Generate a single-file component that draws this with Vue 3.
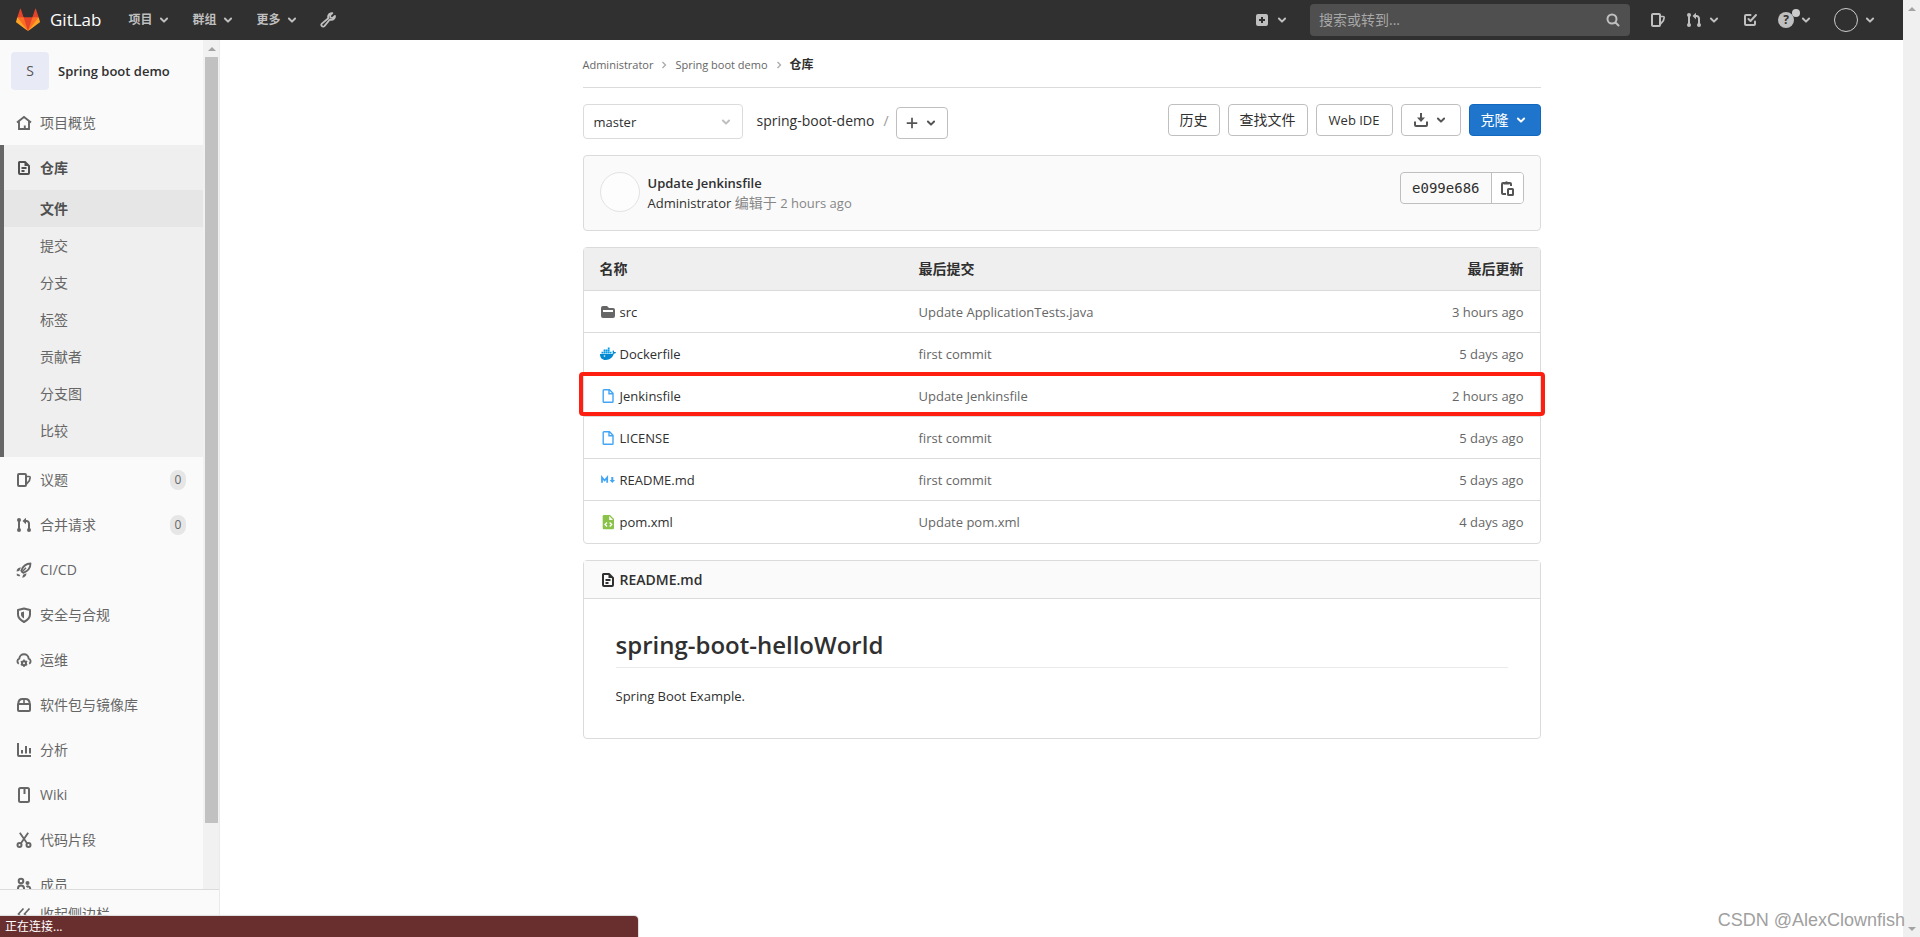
<script setup>
const menus = ['项目', '群组', '更多']

const repoLinks = ['文件', '提交', '分支', '标签', '贡献者', '分支图', '比较']

const sections = [
  { icon: 'issues', label: '议题', count: 0 },
  { icon: 'merge', label: '合并请求', count: 0 },
  { icon: 'rocket', label: 'CI/CD' },
  { icon: 'shield', label: '安全与合规' },
  { icon: 'cloud', label: '运维' },
  { icon: 'package', label: '软件包与镜像库' },
  { icon: 'chart', label: '分析' },
  { icon: 'book', label: 'Wiki' },
  { icon: 'scissors', label: '代码片段' },
  { icon: 'users', label: '成员' }
]

const files = [
  { icon: 'folder', name: 'src', commit: 'Update ApplicationTests.java', updated: '3 hours ago' },
  { icon: 'docker', name: 'Dockerfile', commit: 'first commit', updated: '5 days ago' },
  { icon: 'file', name: 'Jenkinsfile', commit: 'Update Jenkinsfile', updated: '2 hours ago', marked: true },
  { icon: 'file', name: 'LICENSE', commit: 'first commit', updated: '5 days ago' },
  { icon: 'markdown', name: 'README.md', commit: 'first commit', updated: '5 days ago' },
  { icon: 'xml', name: 'pom.xml', commit: 'Update pom.xml', updated: '4 days ago' }
]
</script>

<template>
  <svg class="sprite" aria-hidden="true">
    <symbol id="chevron" viewBox="0 0 16 16"><path d="M4.9 6.5 8 9.6l3.1-3.1" fill="none" stroke="currentColor" stroke-width="2" stroke-linecap="round" stroke-linejoin="round" /></symbol>
    <symbol id="angle" viewBox="0 0 8 8"><path d="M2.5 1 5.5 4l-3 3" fill="none" stroke="currentColor" stroke-width="1.3" /></symbol>
    <symbol id="wrench" viewBox="0 0 16 16"><path d="M8.300 6.300 1.900 11.600a1.700 1.700 0 0 0 2.500 2.500l5.300-6.400c1.600.5 3.300.1 4.300-1.100.8-.9 1.100-1.900.9-2.800L12.600 5.900l-2.200-.3-.3-2.200L12.300 1.200C9.700.6 7.400 3 8.300 6.300z" fill="none" stroke="currentColor" stroke-width="1.800" stroke-linejoin="round" stroke-linecap="round" /></symbol>
    <symbol id="plus-square" viewBox="0 0 16 16"><path fill="currentColor" fill-rule="evenodd" d="M4 2h8a2 2 0 0 1 2 2v8a2 2 0 0 1-2 2H4a2 2 0 0 1-2-2V4a2 2 0 0 1 2-2zm3 3v2H5v2h2v2h2V9h2V7H9V5z" /></symbol>
    <symbol id="search" viewBox="0 0 16 16"><g fill="none" stroke="currentColor" stroke-width="2" stroke-linecap="round"><circle cx="7" cy="7" r="4.500" /><path d="m10.500 10.500 3 3" /></g></symbol>
    <symbol id="issues" viewBox="0 0 16 16"><g fill="none" stroke="currentColor" stroke-width="2" stroke-linejoin="round"><rect x="2" y="2" width="8" height="12" rx="1" /><path d="M10.500 4.500h2.600a1 1 0 0 1 1 1.200l-.7 2.900-2.900 3.400" stroke-width="1.700" /></g></symbol>
    <symbol id="merge" viewBox="0 0 16 16"><g fill="none" stroke="currentColor" stroke-width="2"><path d="M3 3v10" /><path d="M9 4h1.500A2.500 2.500 0 0 1 13 6.500V13" /></g><g fill="currentColor"><circle cx="3" cy="3" r="2" /><circle cx="3" cy="13" r="2" /><circle cx="13" cy="13" r="2" /><path d="M10 .8v6.400L6.500 4z" /></g></symbol>
    <symbol id="todo" viewBox="0 0 16 16"><g fill="none" stroke="currentColor" stroke-width="2" stroke-linecap="round" stroke-linejoin="round"><path d="M8.500 3H4a1 1 0 0 0-1 1v8a1 1 0 0 0 1 1h8a1 1 0 0 0 1-1V9.500" /><path d="m6.500 7 2 2L14 3" /></g></symbol>
    <symbol id="home" viewBox="0 0 16 16"><path d="M1 7.500 8 2l7 5.500M3 6.500V14h10V6.500M8.800 14v-3.500" fill="none" stroke="currentColor" stroke-width="1.900" /></symbol>
    <symbol id="doc" viewBox="0 0 16 16"><path d="M3.500 2H9l4 4v7a1 1 0 0 1-1 1H4a1 1 0 0 1-1-1V2.500zM5.500 8h5M5.500 11h3" fill="none" stroke="currentColor" stroke-width="2" stroke-linejoin="round" /><path d="M8.500 1.500V6H13" fill="currentColor" /></symbol>
    <symbol id="rocket" viewBox="0 0 16 16"><path d="M14.500 1.500c-4.500 0-7.500 2.500-9.300 7.200l2.100 2.100c4.700-1.800 7.200-4.800 7.200-9.300z" fill="none" stroke="currentColor" stroke-width="1.800" stroke-linejoin="round" /><path d="m5.500 10.500 4.500-4.800" stroke="currentColor" stroke-width="1.400" /><path d="M.5 9.500C.8 7 2.500 5.500 5 5.600L3.200 9zM6.200 15.800c2.700-.3 4.300-2 4.200-4.500l-3.300 1.400zM.8 11.500l3.500 1.500-1 1.600-2.500-1.200z" fill="currentColor" /></symbol>
    <symbol id="shield" viewBox="0 0 16 16"><path d="M8 1.500 14 3v4.500c0 3.300-2.600 5.700-6 7.500-3.400-1.800-6-4.200-6-7.500V3z" fill="none" stroke="currentColor" stroke-width="2" stroke-linejoin="round" /><path d="M8 4.500v7C6.200 10.500 5 9.300 5 7.500v-2z" fill="currentColor" /></symbol>
    <symbol id="cloud" viewBox="0 0 16 16"><path d="M2.800 11.800A2.900 2.900 0 0 1 3.300 6.600 4.700 4.700 0 0 1 8 2.300a4.700 4.700 0 0 1 4.700 4.300 2.900 2.900 0 0 1 .5 5.200" fill="none" stroke="currentColor" stroke-width="1.900" /><circle cx="8" cy="11.200" r="2" fill="none" stroke="currentColor" stroke-width="2" /><path d="M8 7.500v2M8 13v2M4.800 9.300l1.600 1M9.600 12.200l1.600 1M4.800 13.100l1.600-1M9.600 10.200l1.600-1" stroke="currentColor" stroke-width="1.500" /></symbol>
    <symbol id="package" viewBox="0 0 16 16"><path d="M2 7h12v6a1 1 0 0 1-1 1H3a1 1 0 0 1-1-1zM2.300 6.500C2.500 3.500 4.500 2 6.500 2h3c2 0 4 1.500 4.200 4.500" fill="none" stroke="currentColor" stroke-width="2" stroke-linejoin="round" /><path d="M8 2v5" stroke="currentColor" stroke-width="1.600" /></symbol>
    <symbol id="chart" viewBox="0 0 16 16"><path d="M2 1v12a1 1 0 0 0 1 1h12M6 8v3.500M10 4v7.500M14 6v5.500" fill="none" stroke="currentColor" stroke-width="2" /></symbol>
    <symbol id="book" viewBox="0 0 16 16"><rect x="3" y="1" width="10" height="14" rx="1.500" fill="none" stroke="currentColor" stroke-width="2" /><path d="M8.500 2v5" stroke="currentColor" stroke-width="2" /></symbol>
    <symbol id="scissors" viewBox="0 0 16 16"><g fill="none" stroke="currentColor" stroke-width="2"><circle cx="3.500" cy="13" r="2" /><circle cx="12.500" cy="13" r="2" /><path d="M3.800.8 11.200 11.500M12.200.8 4.800 11.500" stroke-width="1.800" /></g></symbol>
    <symbol id="users" viewBox="0 0 16 16"><g fill="none" stroke="currentColor" stroke-width="2"><circle cx="5" cy="4" r="2.300" /><path d="M2 14v-2.500a3 3 0 0 1 6 0V14" /><path d="M10.500 10a2.200 2.200 0 0 1 3.700 1.500V14H8" /></g><circle cx="11.500" cy="6" r="2" fill="currentColor" /></symbol>
    <symbol id="collapse" viewBox="0 0 16 16"><path d="M7.500 2.500 2.500 8l5 5.500M13.500 2.500l-5 5.500 5 5.500" fill="none" stroke="currentColor" stroke-width="1.700" /></symbol>
    <symbol id="plus" viewBox="0 0 16 16"><path d="M8 2v12M2 8h12" stroke="currentColor" stroke-width="2" /></symbol>
    <symbol id="download" viewBox="0 0 16 16"><path d="M2 9.500V13a1 1 0 0 0 1 1h10a1 1 0 0 0 1-1V9.500" fill="none" stroke="currentColor" stroke-width="2" /><path d="M8 1v6" stroke="currentColor" stroke-width="2" /><path d="M4 5.500h8L8 10z" fill="currentColor" /></symbol>
    <symbol id="copy" viewBox="0 0 16 16"><path d="M7 14H4a1 1 0 0 1-1-1V4a1 1 0 0 1 1-1h7a1 1 0 0 1 1 1v2" fill="none" stroke="currentColor" stroke-width="2" /><path d="M4.500 4.500V2h1.700a1.500 1.500 0 0 1 2.600 0h1.700v2.500z" fill="currentColor" /><rect x="9" y="9" width="5" height="6" rx=".5" fill="none" stroke="currentColor" stroke-width="2" /></symbol>
    <symbol id="folder" viewBox="0 0 16 16"><path fill="#666" fill-rule="evenodd" d="M3 2h4l2 2h4a2 2 0 0 1 2 2v6a2 2 0 0 1-2 2H3a2 2 0 0 1-2-2V4a2 2 0 0 1 2-2zm0 4v2h10V6z" /></symbol>
    <symbol id="docker" viewBox="0 0 16 16"><path fill="#0288d1" d="M0 8h11.600c.8 0 1.300-.4 1.200-1.500-.4-.8-.2-1.700.3-2.200.7.5 1 1.100 1 1.800.8-.1 1.500 0 2 .3-.4 1-1.200 1.400-2.300 1.400C12.500 11.800 9.700 14 5.800 14 2 14 0 11.800 0 8z" /><path fill="#039be5" d="M1.500 5.700h1.800v1.800H1.500zM3.600 5.700h1.800v1.800H3.600zM5.700 5.700h1.800v1.800H5.700zM7.800 5.700h1.800v1.800H7.800zM9.900 5.700h1.600v1.800H9.900zM3.600 3.600h1.800v1.800H3.600zM5.700 3.600h1.800v1.800H5.700zM7.800 3.600h1.800v1.800H7.800zM7.800 1.500h1.800v1.800H7.800z" /><circle cx="4.500" cy="10" r=".8" fill="#fff" /></symbol>
    <symbol id="file" viewBox="0 0 16 16"><path d="M4 1.700h5.500L13 5.200v8.300a.8.8 0 0 1-.8.800H4a.8.8 0 0 1-.8-.8v-11A.8.8 0 0 1 4 1.700zM9 2v3.800h4" fill="none" stroke="#42a5f5" stroke-width="1.400" /></symbol>
    <symbol id="markdown" viewBox="0 0 16 16"><path d="M2 10.800V5.500l2.600 3 2.600-3v5.300" fill="none" stroke="#42a5f5" stroke-width="1.800" /><path d="M11.300 5h2v3h1.700l-2.700 3-2.700-3h1.700z" fill="#42a5f5" /></symbol>
    <symbol id="xml" viewBox="0 0 16 16"><path fill="#8bc34a" d="M4 1h6l4 4v9a1.300 1.300 0 0 1-1.300 1.300H4A1.300 1.300 0 0 1 2.700 14V2.300A1.300 1.300 0 0 1 4 1z" /><path d="M9.200 2v4H13z" fill="#fff" /><path d="M7 8.500 5 10.500l2 2M9.700 8.500l2 2-2 2" fill="none" stroke="#fff" stroke-width="1.300" /></symbol>
  </svg>

  <div class="window">
    <div class="page">
      <header class="navbar">
        <a class="brand" href="#">
          <svg width="24" height="24" viewBox="0 0 36 36" aria-hidden="true">
            <path fill="#e24329" d="M2 14l9.380 9v-9l-4-12.280c-.205-.632-1.176-.632-1.380 0z" />
            <path fill="#e24329" d="M34 14l-9.380 9v-9l4-12.280c.205-.632 1.176-.632 1.380 0z" />
            <path fill="#e24329" d="M18 34.380 3 14h30z" />
            <path fill="#fc6d26" d="M18 34.380 11.380 14H2l4 11z" />
            <path fill="#fc6d26" d="M18 34.380 24.620 14H34l-4 11z" />
            <path fill="#fca326" d="M2 14 .1 20.160c-.18.565 0 1.200.5 1.560l17.420 12.660z" />
            <path fill="#fca326" d="m34 14 1.900 6.160c.18.565 0 1.200-.5 1.560L18 34.380z" />
          </svg>
          <span>GitLab</span>
        </a>
        <nav class="menus">
          <button v-for="m in menus" :key="m" type="button" class="nav-btn">
            {{ m }}<svg class="icon"><use href="#chevron" /></svg>
          </button>
          <a class="nav-btn" href="#" aria-label="管理"><svg class="icon"><use href="#wrench" /></svg></a>
        </nav>
        <div class="tools">
          <button type="button" class="nav-btn" aria-label="新建">
            <svg class="icon"><use href="#plus-square" /></svg><svg class="icon"><use href="#chevron" /></svg>
          </button>
          <label class="search">
            <input type="text" placeholder="搜索或转到..." aria-label="搜索或转到">
            <svg class="icon"><use href="#search" /></svg>
          </label>
          <a class="nav-btn" href="#" aria-label="议题"><svg class="icon"><use href="#issues" /></svg></a>
          <button type="button" class="nav-btn" aria-label="合并请求">
            <svg class="icon"><use href="#merge" /></svg><svg class="icon"><use href="#chevron" /></svg>
          </button>
          <a class="nav-btn" href="#" aria-label="待办事项"><svg class="icon"><use href="#todo" /></svg></a>
          <button type="button" class="nav-btn help" aria-label="帮助">
            <span class="question">?</span><span class="dot"></span><svg class="icon"><use href="#chevron" /></svg>
          </button>
          <button type="button" class="nav-btn" aria-label="用户">
            <span class="user"></span><svg class="icon"><use href="#chevron" /></svg>
          </button>
        </div>
      </header>

      <div class="body">
        <aside class="sidebar">
          <div class="scroller">
            <nav class="side-nav">
              <a class="project" href="#"><span class="tile">S</span><span>Spring boot demo</span></a>
              <a class="item" href="#"><svg class="icon"><use href="#home" /></svg>项目概览</a>
              <div class="group">
                <a class="item strong" href="#"><svg class="icon"><use href="#doc" /></svg>仓库</a>
                <a v-for="(l, i) in repoLinks" :key="l" class="sub" :class="{ current: i === 0 }" href="#">{{ l }}</a>
              </div>
              <a v-for="s in sections" :key="s.label" class="item" href="#">
                <svg class="icon"><use :href="'#' + s.icon" /></svg>{{ s.label }}
                <span v-if="s.count !== undefined" class="count">{{ s.count }}</span>
              </a>
            </nav>
            <div class="track">
              <span class="up"></span>
              <span class="thumb"></span>
            </div>
          </div>
          <button type="button" class="toggle"><svg class="icon"><use href="#collapse" /></svg>收起侧边栏</button>
        </aside>

        <main class="main">
          <div class="container">
            <nav class="crumbs">
              <a href="#">Administrator</a><svg class="angle"><use href="#angle" /></svg>
              <a href="#">Spring boot demo</a><svg class="angle"><use href="#angle" /></svg>
              <a class="here" href="#">仓库</a>
            </nav>

            <div class="controls">
              <button type="button" class="branch">master<svg class="icon"><use href="#chevron" /></svg></button>
              <a class="path" href="#">spring-boot-demo</a>
              <span class="slash">/</span>
              <button type="button" class="btn add" aria-label="添加">
                <svg class="glyph"><use href="#plus" /></svg><svg class="icon"><use href="#chevron" /></svg>
              </button>
              <div class="actions">
                <a class="btn" href="#">历史</a>
                <a class="btn" href="#">查找文件</a>
                <a class="btn wide" href="#">Web IDE</a>
                <button type="button" class="btn" aria-label="下载">
                  <svg class="icon"><use href="#download" /></svg><svg class="icon"><use href="#chevron" /></svg>
                </button>
                <button type="button" class="btn primary">克隆<svg class="icon"><use href="#chevron" /></svg></button>
              </div>
            </div>

            <section class="commit">
              <span class="avatar"></span>
              <div class="info">
                <a class="title" href="#">Update Jenkinsfile</a>
                <p><a href="#">Administrator</a> <span class="zh">编辑于</span> 2 hours ago</p>
              </div>
              <div class="sha">
                <span>e099e686</span>
                <button type="button" aria-label="复制"><svg class="icon"><use href="#copy" /></svg></button>
              </div>
            </section>

            <div class="tree">
              <table>
                <thead>
                  <tr><th class="c-name">名称</th><th>最后提交</th><th class="c-time">最后更新</th></tr>
                </thead>
                <tbody>
                  <tr v-for="f in files" :key="f.name" :class="{ marked: f.marked }">
                    <td class="c-name"><a href="#"><svg class="icon"><use :href="'#' + f.icon" /></svg>{{ f.name }}</a></td>
                    <td>{{ f.commit }}</td>
                    <td class="c-time">{{ f.updated }}</td>
                  </tr>
                </tbody>
              </table>
            </div>

            <article class="readme">
              <header><svg class="icon"><use href="#doc" /></svg><a href="#">README.md</a></header>
              <div class="prose">
                <h1>spring-boot-helloWorld</h1>
                <p>Spring Boot Example.</p>
              </div>
            </article>
          </div>
        </main>
      </div>
    </div>
    <div class="page-track"><span class="up"></span><span class="down"></span></div>
    <div class="status">正在连接...</div>
    <div class="watermark">CSDN @AlexClownfish</div>
  </div>
</template>

<style>
body { margin: 0; }
</style>

<style scoped>
* { box-sizing: border-box; }
a { color: inherit; text-decoration: none; }
button { font: inherit; color: inherit; background: none; border: 0; padding: 0; }
p, h1 { margin: 0; }
.sprite { position: absolute; width: 0; height: 0; }
.icon { width: 16px; height: 16px; flex: none; display: block; }

.window {
  position: relative;
  display: flex;
  height: 100vh;
  overflow: hidden;
  background: #fff;
  color: #303030;
  font: 14px/20px "Open Sans", "Noto Sans CJK SC", sans-serif;
}
.page { flex: 1; min-width: 0; display: flex; flex-direction: column; }

.navbar {
  height: 40px;
  flex: none;
  display: flex;
  align-items: center;
  padding: 0 25px 0 16px;
  background: #303030;
  color: #bfbfbf;
}
.brand { display: flex; align-items: center; gap: 10px; font-size: 17px; color: #fff; }
.menus { display: flex; gap: 20px; margin-left: 27px; font-size: 12px; font-weight: 700; }
.nav-btn { display: flex; align-items: center; gap: 4px; position: relative; }
.tools { display: flex; align-items: center; gap: 20px; margin-left: auto; }
.search {
  display: flex;
  align-items: center;
  width: 320px;
  height: 32px;
  padding: 0 9px;
  border-radius: 4px;
  background: #4f4f4f;
}
.search input {
  flex: 1;
  min-width: 0;
  padding: 0;
  border: 0;
  outline: 0;
  background: none;
  color: #fff;
  font: 14px/20px "Open Sans", "Noto Sans CJK SC", sans-serif;
}
.search input::placeholder { color: #a8a8a8; opacity: 1; }
.question {
  width: 16px;
  height: 16px;
  border-radius: 50%;
  background: #bfbfbf;
  color: #303030;
  font-size: 12px;
  font-weight: 700;
  line-height: 16px;
  text-align: center;
}
.dot { position: absolute; left: 14px; top: -3px; width: 8px; height: 8px; border-radius: 50%; background: #ccc; }
.user { width: 24px; height: 24px; border: 1px solid #ccc; border-radius: 50%; }

.body { flex: 1; min-height: 0; display: flex; }
.sidebar {
  width: 220px;
  flex: none;
  display: flex;
  flex-direction: column;
  border-right: 1px solid #eaeaea;
  background: #fafafa;
  color: #666;
}
.scroller { flex: 1; min-height: 0; display: flex; }
.side-nav { flex: 1; min-width: 0; overflow: hidden; }
.project {
  display: flex;
  align-items: center;
  gap: 9px;
  height: 60px;
  padding: 2px 11px 0;
  color: #303030;
  font-size: 13px;
  font-weight: 600;
}
.tile {
  width: 38px;
  height: 38px;
  border-radius: 4px;
  background: #e8eaf6;
  color: #555;
  font-size: 14px;
  font-weight: 400;
  line-height: 38px;
  text-align: center;
}
.item { display: flex; align-items: center; gap: 8px; height: 45px; padding: 0 17px 0 16px; }
.group { padding-bottom: 8px; background: #efefef; box-shadow: inset 4px 0 #666; }
.strong { color: #4f4f4f; font-weight: 700; }
.sub { display: flex; align-items: center; height: 37px; padding-left: 40px; }
.current { color: #4f4f4f; font-weight: 700; background: #e6e6e6; box-shadow: inset 4px 0 #666; }
.count {
  margin-left: auto;
  width: 16px;
  border-radius: 10px;
  background: #e6e6e6;
  font-size: 12px;
  text-align: center;
}
.track { width: 16px; flex: none; padding: 0 1px 0 2px; background: #f1f1f1; }
.track .thumb { display: block; height: 766px; max-height: calc(100% - 17px); background: #c1c1c1; }
.up, .down { display: block; height: 17px; padding-top: 7px; }
.up::before, .down::before {
  content: "";
  display: block;
  width: 0;
  margin: 0 auto;
  border: 4px solid transparent;
}
.up::before { border-top: 0; border-bottom-color: #a3a3a3; }
.down::before { border-bottom: 0; border-top-color: #a3a3a3; }
.toggle {
  display: flex;
  align-items: center;
  gap: 8px;
  height: 48px;
  flex: none;
  padding-left: 16px;
  border-top: 1px solid #dbdbdb;
}

.main { flex: 1; min-width: 0; }
.container { max-width: 990px; margin: 0 auto; padding: 0 16px; }
.crumbs {
  display: flex;
  align-items: center;
  height: 48px;
  padding-top: 2px;
  border-bottom: 1px solid #dbdbdb;
  color: #666;
  font-size: 11px;
}
.angle { width: 8px; height: 8px; margin: 0 7px; color: #aaa; }
.here { color: #303030; font-size: 12px; font-weight: 700; }

.controls { display: flex; align-items: flex-start; padding: 16px 0; }
.branch {
  display: flex;
  align-items: center;
  justify-content: space-between;
  width: 160px;
  height: 35px;
  padding: 0 8px 0 10px;
  border: 1px solid #dbdbdb;
  border-radius: 4px;
  font-size: 13px;
}
.branch .icon { color: #bfbfbf; }
.path { margin: 7px 9px 0 14px; }
.slash { margin: 7px 7px 0 0; color: #999; }
.btn {
  display: flex;
  align-items: center;
  gap: 4px;
  height: 32px;
  padding: 0 11px;
  border: 1px solid #bfbfbf;
  border-radius: 4px;
  background: #fff;
}
.btn.wide { padding: 0 12px; font-size: 13px; }
.btn .icon { color: #555; }
.btn.add { margin-top: 3px; padding: 0 8px; }
.glyph { width: 14px; height: 14px; color: #555; }
.actions { display: flex; gap: 8px; margin-left: auto; }
.btn.primary { border-color: #1068bf; background: #1f75cb; color: #fff; }
.btn.primary .icon { color: #fff; }

.commit {
  display: flex;
  align-items: flex-start;
  min-height: 76px;
  padding: 16px;
  border: 1px solid #dbdbdb;
  border-radius: 4px;
  background: #fafafa;
  font-size: 13px;
}
.avatar { width: 40px; height: 40px; border: 1px solid #e3e3e3; border-radius: 50%; background: #fdfdfd; }
.info { margin-left: 8px; padding-top: 1px; color: #868686; line-height: 20px; }
.info a { color: #303030; }
.info .title { display: block; font-weight: 600; }
.zh { font-size: 14px; line-height: 14px; }
.sha { display: flex; height: 32px; margin-left: auto; border: 1px solid #bfbfbf; border-radius: 4px; }
.sha span { padding: 0 11px; font: 14px/30px "DejaVu Sans Mono", monospace; }
.sha button {
  width: 32px;
  padding-left: 7px;
  border-left: 1px solid #bfbfbf;
  border-radius: 0 3px 3px 0;
  background: #fff;
  color: #555;
}

.tree { margin-top: 16px; border: 1px solid #dbdbdb; border-radius: 4px; }
table { width: 100%; border-spacing: 0; table-layout: fixed; }
th { height: 42px; padding: 0 16px; background: #efefef; font-weight: 700; text-align: left; }
td { height: 42px; padding: 0 16px; border-top: 1px solid #dbdbdb; color: #666; font-size: 13px; }
tr:last-child td { height: 43px; }
.c-name { width: 319px; }
.c-time { width: 200px; text-align: right; }
td a { display: flex; align-items: center; gap: 4px; color: #303030; }
.marked { position: relative; }
.marked .c-name::after {
  content: "";
  position: absolute;
  inset: -2px -5px 0;
  border: 4px solid #ff1f11;
  border-radius: 4px;
}

.readme { margin-top: 16px; border: 1px solid #dbdbdb; border-radius: 4px; }
.readme header {
  display: flex;
  align-items: center;
  gap: 4px;
  height: 38px;
  padding: 0 16px;
  border-bottom: 1px solid #dbdbdb;
  background: #fafafa;
  font-weight: 600;
}
.prose { padding: 28px 32px 30px; font-size: 13px; }
.prose h1 {
  padding-bottom: 4px;
  margin-bottom: 16px;
  border-bottom: 1px solid #eaeaea;
  font-size: 24px;
  font-weight: 600;
  line-height: 36px;
}
.prose p { line-height: 24px; }

.page-track {
  width: 17px;
  flex: none;
  display: flex;
  flex-direction: column;
  justify-content: space-between;
  background: #f0f0f0;
}
.status {
  position: absolute;
  left: 0;
  bottom: 0;
  width: 638px;
  height: 21px;
  padding-left: 5px;
  border-radius: 0 4px 0 0;
  background: #692f2f;
  box-shadow: 0 0 1px 1px #ddd;
  color: #fff;
  font-size: 12px;
  line-height: 22px;
}
.watermark {
  position: absolute;
  right: 15px;
  bottom: 5px;
  color: #a0a0a0;
  font: 18px/24px "Liberation Sans", sans-serif;
}
</style>
